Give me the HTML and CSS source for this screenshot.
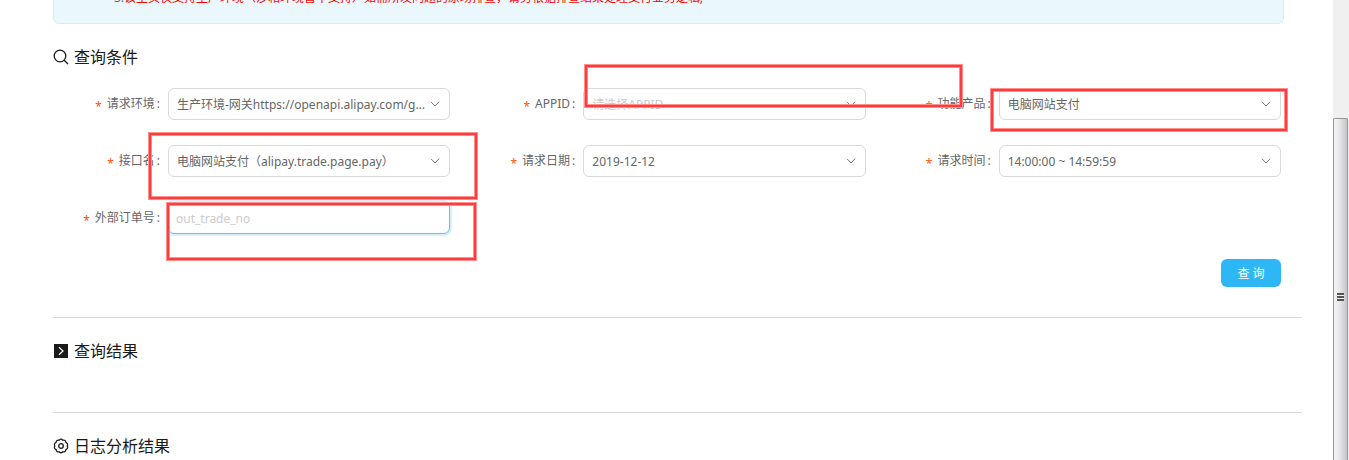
FILE: index.html
```
<!DOCTYPE html>
<html lang="zh-CN">
  <head>
    <meta charset="utf-8">
    <title>查询条件</title>
    <link rel="stylesheet" href="styles.css">
  </head>
  <body>
    <div class="page">
      <main class="content">
        <div class="notice">
          <p>3.<span class="warn">该主页仅支持生产环境（沙箱环境暂不支持）如需所发问题的原场排查，请务根据排查结果处理支付业务逻辑;</span></p>
        </div>

        <section class="section">
          <h2 class="title">
            <svg class="icon" viewBox="0 0 16 16" fill="none" stroke="currentColor" stroke-width="1.3">
              <circle cx="7" cy="7" r="5.8"/>
              <path d="M11.2 11.2L15 15"/>
            </svg>
            查询条件
          </h2>
          <form class="query">
            <div class="field">
              <label for="env">请求环境</label>
              <div class="control">
                <select id="env"><option>生产环境-网关https://openapi.alipay.com/gateway.do</option></select>
                <svg class="arrow" viewBox="0 0 10 6"><path d="M1 .8L5 5L9 .8"/></svg>
              </div>
            </div>
            <div class="field">
              <label for="appid">APPID</label>
              <div class="control">
                <select id="appid" class="empty"><option>请选择APPID</option></select>
                <svg class="arrow" viewBox="0 0 10 6"><path d="M1 .8L5 5L9 .8"/></svg>
                <span class="mark mark-appid"></span>
              </div>
            </div>
            <div class="field">
              <label for="product">功能产品</label>
              <div class="control">
                <select id="product"><option>电脑网站支付</option></select>
                <svg class="arrow" viewBox="0 0 10 6"><path d="M1 .8L5 5L9 .8"/></svg>
                <span class="mark mark-product"></span>
              </div>
            </div>
            <div class="field">
              <label for="api">接口名</label>
              <div class="control">
                <select id="api"><option>电脑网站支付（alipay.trade.page.pay）</option></select>
                <svg class="arrow" viewBox="0 0 10 6"><path d="M1 .8L5 5L9 .8"/></svg>
                <span class="mark mark-api"></span>
              </div>
            </div>
            <div class="field">
              <label for="date">请求日期</label>
              <div class="control">
                <select id="date"><option>2019-12-12</option></select>
                <svg class="arrow" viewBox="0 0 10 6"><path d="M1 .8L5 5L9 .8"/></svg>
              </div>
            </div>
            <div class="field">
              <label for="time">请求时间</label>
              <div class="control">
                <select id="time"><option>14:00:00 ~ 14:59:59</option></select>
                <svg class="arrow" viewBox="0 0 10 6"><path d="M1 .8L5 5L9 .8"/></svg>
              </div>
            </div>
            <div class="field">
              <label for="order">外部订单号</label>
              <div class="control">
                <input id="order" class="active" type="text" placeholder="out_trade_no">
                <span class="mark mark-order"></span>
              </div>
            </div>
            <div class="actions">
              <button type="button">查 询</button>
            </div>
          </form>
        </section>

        <section class="section">
          <h2 class="title">
            <svg class="icon" viewBox="0 0 16 16" fill="none">
              <rect x="1" y="1" width="14" height="14" fill="#1a1a1a"/>
              <path d="M6 4.2L10 8L6 11.8" stroke="#fff" stroke-width="1.3"/>
            </svg>
            查询结果
          </h2>
        </section>

        <section class="section">
          <h2 class="title">
            <svg class="icon" viewBox="0 0 16 16" fill="none" stroke="currentColor" stroke-width="1.3">
              <path d="M6.2 2.2Q8 .2 9.8 2.2Q12.6 1.8 12.9 4.4Q15.5 5.8 14.2 8Q15.5 10.2 12.9 11.6Q12.6 14.2 9.8 13.8Q8 15.8 6.2 13.8Q3.4 14.2 3.1 11.6Q.5 10.2 1.8 8Q.5 5.8 3.1 4.4Q3.4 1.8 6.2 2.2Z"/>
              <circle cx="8" cy="8" r="2.3"/>
            </svg>
            日志分析结果
          </h2>
        </section>
      </main>

      <div class="scrollbar">
        <div class="thumb"><span class="grip"></span></div>
      </div>
    </div>
  </body>
</html>
```

FILE: styles.css
```
* {
  box-sizing: border-box;
}
body {
  margin: 0;
  background: #fff;
  color: #666;
  font-family: 'Noto Sans', 'Noto Sans CJK SC', sans-serif;
  font-size: 12px;
}
.page {
  display: flex;
  height: 100vh;
  overflow: hidden;
}
.content {
  flex: 1;
  min-width: 0;
  padding: 0 31px 0 53px;
}

/* notice, scrolled up so only its last line shows */
.notice {
  margin: -20px 18px 0 0;
  padding: 8px 60px 17px;
  background: #eaf7fd;
  border: 1px solid #d2eefa;
  border-radius: 6px;
}
.notice p {
  margin: 0;
  line-height: 17px;
  white-space: nowrap;
}
.warn {
  color: #f00;
}

.section {
  padding: 21px 0 30px;
}
.section + .section {
  border-top: 1px solid #d9d9d9;
}
.title {
  display: flex;
  align-items: center;
  gap: 5px;
  margin: 0 0 19px;
  color: #1a1a1a;
  font-size: 16px;
  font-weight: normal;
  line-height: 24px;
}
.icon {
  width: 16px;
  height: 16px;
}

.query {
  display: grid;
  grid-template-columns: repeat(3, 1fr);
  gap: 25px 18px;
  padding-right: 21px;
}
.field {
  display: flex;
  align-items: center;
  min-width: 0;
}
.field label {
  width: 115px;
  padding-right: 8px;
  line-height: 18px;
  text-align: right;
  white-space: nowrap;
}
.field label::before {
  content: '*';
  margin-right: 5px;
  color: #f50;
  line-height: 1;
  vertical-align: -3px;
}
.field label::after {
  content: ':';
  margin-left: 2px;
}
.control {
  position: relative;
  flex: 1;
  min-width: 0;
}
.control select,
.control input {
  display: block;
  width: 100%;
  height: 32px;
  padding: 0 24px 0 8px;
  border: 1px solid #d9d9d9;
  border-radius: 6px;
  outline: none;
  background: #fff;
  color: #666;
  font: inherit;
  appearance: none;
  text-overflow: ellipsis;
}
.control input {
  padding: 0 7px;
}
.control input::placeholder,
.control .empty {
  color: #ccc;
}
.control .active {
  border-color: #57c5f7;
  box-shadow: 0 0 0 2px rgba(45, 183, 245, 0.2);
}
.arrow {
  position: absolute;
  top: 13px;
  right: 10px;
  width: 10px;
  height: 6px;
  fill: none;
  stroke: #777;
  pointer-events: none;
}
.actions {
  grid-column: 1 / -1;
  text-align: right;
}
.actions button {
  width: 60px;
  height: 28px;
  padding: 0;
  border: 0;
  border-radius: 6px;
  background: #2db7f5;
  color: #fff;
  font: inherit;
}

/* red highlight boxes */
.mark {
  position: absolute;
  z-index: 1;
  border: 2px solid #ff3b3b;
  box-shadow: 0 0 0 1px #ff9090, inset 0 0 0 1px #ff9090;
  pointer-events: none;
}
.mark-appid {
  top: -23px;
  left: 2px;
  width: 377px;
  height: 42px;
}
.mark-product {
  top: 1px;
  left: -8px;
  width: 296px;
  height: 42px;
}
.mark-api {
  top: -12px;
  left: -19px;
  width: 328px;
  height: 66px;
}
.mark-order {
  top: 1px;
  left: -1px;
  width: 309px;
  height: 57px;
}

.scrollbar {
  display: flex;
  flex-direction: column;
  width: 16px;
  padding-top: 118px;
  background: #f0f0f0;
}
.thumb {
  display: flex;
  flex: 1;
  align-items: center;
  justify-content: center;
  margin-right: 1px;
  padding-top: 14px;
  border: 1px solid #979797;
  border-bottom: 0;
  border-radius: 2px 2px 0 0;
  background: linear-gradient(to right, #f5f5f5, #e6e6e8 45%, #c4c4c8);
}
.grip {
  width: 7px;
  height: 8px;
  background: repeating-linear-gradient(#555 0 2px, #eee 2px 3px);
}
```
